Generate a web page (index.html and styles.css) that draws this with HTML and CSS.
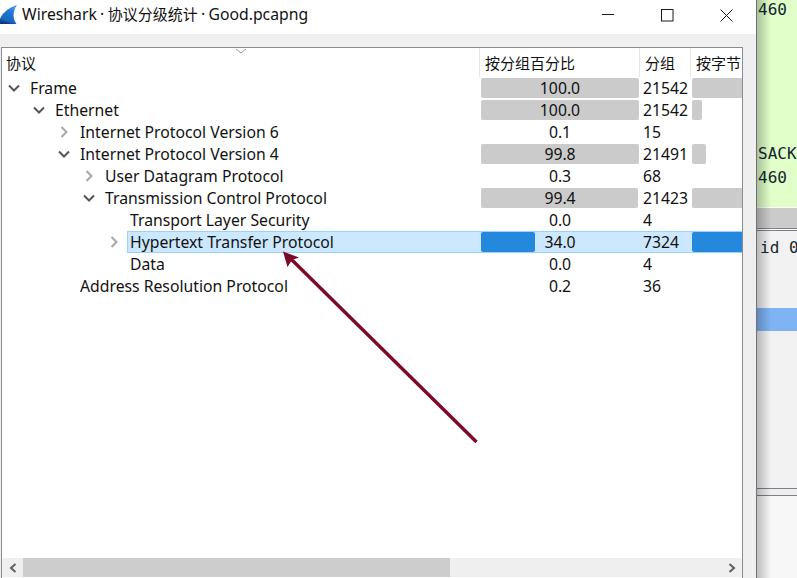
FILE: index.html
```html
<!DOCTYPE html>
<html lang="zh">
<head>
<meta charset="utf-8">
<title>Wireshark · 协议分级统计 · Good.pcapng</title>
<link rel="stylesheet" href="styles.css">
</head>
<body>
<div class="desktop">
  <main class="window">
    <header class="titlebar">
      <svg class="app-icon" width="17" height="20" viewBox="0 0 17 20">
        <defs><linearGradient id="fin" x1="0.8" y1="0" x2="0.5" y2="1"><stop offset="0" stop-color="#5aa8ea"/><stop offset="0.35" stop-color="#1f78d6"/><stop offset="0.85" stop-color="#1766bd"/><stop offset="1" stop-color="#123a78"/></linearGradient></defs>
        <path d="M-1 16C2 8 8 3 17 0C13 6 12 13 16.500 19L-1 19Z" fill="url(#fin)"/>
      </svg>
      <span class="title">Wireshark · <span class="cjk">协议分级统计</span> · Good.pcapng</span>
      <div class="controls">
        <svg class="control" width="14" height="13" viewBox="0 0 14 13"><path d="M1 5.5H13" stroke="#1a1a1a" fill="none"/></svg>
        <svg class="control" width="13" height="13" viewBox="0 0 13 13"><rect x="0.5" y="0.5" width="11.5" height="11.5" stroke="#1a1a1a" fill="none"/></svg>
        <svg class="control" width="13" height="13" viewBox="0 0 13 13"><path d="M0.5 0.5L12.5 12.5M12.5 0.5L0.5 12.5" stroke="#1a1a1a" fill="none"/></svg>
      </div>
    </header>
    <div class="content">
      <section class="tree">
        <div class="table">
          <div class="row head">
            <div class="hcell">协议<svg class="sort" width="12" height="6" viewBox="0 0 12 6"><path d="M1 1L6 5L11 1" stroke="#9a9a9a" fill="none"/></svg></div>
            <div class="hcell">按分组百分比</div>
            <div class="hcell">分组</div>
            <div class="hcell">按字节</div>
          </div>

          <div class="row l0">
            <div class="name"><span class="toggle"><svg width="12" height="8" viewBox="0 0 12 8"><path class="open" d="M1 1.5L6 6.5L11 1.5"/></svg></span><span class="label">Frame</span></div>
            <div class="cell pct"><i class="bar" style="width:158px"></i><b>100.0</b></div>
            <div class="cell num">21542</div>
            <div class="cell"><i class="bar" style="width:60px"></i></div>
          </div>
          <div class="row l1">
            <div class="name"><span class="toggle"><svg width="12" height="8" viewBox="0 0 12 8"><path class="open" d="M1 1.5L6 6.5L11 1.5"/></svg></span><span class="label">Ethernet</span></div>
            <div class="cell pct"><i class="bar" style="width:158px"></i><b>100.0</b></div>
            <div class="cell num">21542</div>
            <div class="cell"><i class="bar" style="width:10px"></i></div>
          </div>
          <div class="row l2">
            <div class="name"><span class="toggle"><svg class="chev-r" width="8" height="12" viewBox="0 0 8 12"><path class="closed" d="M1.5 1L6.5 6L1.5 11"/></svg></span><span class="label">Internet Protocol Version 6</span></div>
            <div class="cell pct"><b>0.1</b></div>
            <div class="cell num">15</div>
            <div class="cell"></div>
          </div>
          <div class="row l2">
            <div class="name"><span class="toggle"><svg width="12" height="8" viewBox="0 0 12 8"><path class="open" d="M1 1.5L6 6.5L11 1.5"/></svg></span><span class="label">Internet Protocol Version 4</span></div>
            <div class="cell pct"><i class="bar" style="width:158px"></i><b>99.8</b></div>
            <div class="cell num">21491</div>
            <div class="cell"><i class="bar" style="width:14px"></i></div>
          </div>
          <div class="row l3">
            <div class="name"><span class="toggle"><svg class="chev-r" width="8" height="12" viewBox="0 0 8 12"><path class="closed" d="M1.5 1L6.5 6L1.5 11"/></svg></span><span class="label">User Datagram Protocol</span></div>
            <div class="cell pct"><b>0.3</b></div>
            <div class="cell num">68</div>
            <div class="cell"></div>
          </div>
          <div class="row l3">
            <div class="name"><span class="toggle"><svg width="12" height="8" viewBox="0 0 12 8"><path class="open" d="M1 1.5L6 6.5L11 1.5"/></svg></span><span class="label">Transmission Control Protocol</span></div>
            <div class="cell pct"><i class="bar" style="width:157px"></i><b>99.4</b></div>
            <div class="cell num">21423</div>
            <div class="cell"><i class="bar" style="width:60px"></i></div>
          </div>
          <div class="row l4">
            <div class="name"><span class="toggle"></span><span class="label">Transport Layer Security</span></div>
            <div class="cell pct"><b>0.0</b></div>
            <div class="cell num">4</div>
            <div class="cell"></div>
          </div>
          <div class="row l4 selected">
            <div class="name"><span class="toggle"><svg class="chev-r" width="8" height="12" viewBox="0 0 8 12"><path class="closed" d="M1.5 1L6.5 6L1.5 11"/></svg></span><span class="label">Hypertext Transfer Protocol</span></div>
            <div class="cell pct"><i class="bar" style="width:54px"></i><b>34.0</b></div>
            <div class="cell num">7324</div>
            <div class="cell"><i class="bar" style="width:60px"></i></div>
          </div>
          <div class="row l4">
            <div class="name"><span class="toggle"></span><span class="label">Data</span></div>
            <div class="cell pct"><b>0.0</b></div>
            <div class="cell num">4</div>
            <div class="cell"></div>
          </div>
          <div class="row l2">
            <div class="name"><span class="toggle"></span><span class="label">Address Resolution Protocol</span></div>
            <div class="cell pct"><b>0.2</b></div>
            <div class="cell num">36</div>
            <div class="cell"></div>
          </div>
        </div>
        <div class="hscroll">
          <span class="arrow-btn"><svg width="8" height="10" viewBox="0 0 8 10"><path d="M6.5 1L2 5L6.5 9" stroke="#606060" stroke-width="2" fill="none"/></svg></span>
          <span class="thumb"></span>
          <span class="track"></span>
          <span class="arrow-btn"><svg width="8" height="10" viewBox="0 0 8 10"><path d="M1.5 1L6 5L1.5 9" stroke="#606060" stroke-width="2" fill="none"/></svg></span>
        </div>
      </section>
    </div>
  </main>

  <aside class="behind">
    <div class="packets">
      <div class="line">460</div>
      <div class="line gap">SACK</div>
      <div class="line">460</div>
    </div>
    <div class="band"></div>
    <div class="detail">
      <div class="line pad">id 0</div>
      <div class="picked"></div>
    </div>
    <div class="bytes-split"></div>
    <div class="bottom"></div>
  </aside>

  <svg class="callout" width="797" height="578" viewBox="0 0 797 578">
    <path d="M476.5 442L291 259" stroke="#7d0a26" stroke-width="3.4" fill="none"/>
    <path d="M283 251.5L299 257.500L292 260L287.500 267Z" fill="#7d0a26"/>
  </svg>
</div>
</body>
</html>
```
FILE: styles.css
```css
* { box-sizing: border-box; }
html, body { margin: 0; padding: 0; }
body { background: #fff; color: #111; font-family: "Noto Sans", "Noto Sans CJK SC", sans-serif; font-size: 15.75px; }

.desktop { position: relative; display: flex; width: 797px; height: 578px; overflow: hidden; }

.window { width: 757px; height: 578px; display: flex; flex-direction: column; border-right: 1px solid #6f7278; }
.titlebar { height: 34px; flex: none; display: flex; align-items: flex-start; background: #fff; }
.app-icon { flex: none; margin-top: 5px; }
.title { margin-left: 5px; line-height: 29px; white-space: nowrap; color: #111; word-spacing: -0.8px; }
.cjk { font-size: 15px; }
.controls { margin-left: auto; margin-right: 23px; display: flex; gap: 46px; padding-top: 9px; }
.control { display: block; }

.content { flex: 1; min-height: 0; background: #efefef; padding: 13px 13px 0 1px; display: flex; }
.tree { flex: 1; display: flex; flex-direction: column; background: #fff; border: 1px solid #878b94; border-bottom: 0; min-width: 0; }
.table { flex: 1; min-height: 0; }

.row { display: grid; grid-template-columns: 478px 160px 51px 51px; height: 22px; }
.head { height: 29px; font-size: 15px; }
.hcell { position: relative; padding: 2px 0 0 5px; line-height: 26px; white-space: nowrap; overflow: hidden; border-right: 1px solid #e6e6e6; }
.hcell:first-child { padding-left: 4px; }
.hcell:last-child { border-right: 0; }
.sort { position: absolute; left: 233px; top: 0; }

.name { display: flex; min-width: 0; line-height: 22px; }
.l0 .name { padding-left: 3px; }
.l1 .name { padding-left: 28px; }
.l2 .name { padding-left: 53px; }
.l3 .name { padding-left: 78px; }
.l4 .name { padding-left: 103px; }
.toggle { flex: none; width: 22px; display: flex; align-items: center; padding-left: 3px; }
.toggle svg { display: block; }
.toggle .chev-r { margin-left: 2px; }
.open { fill: none; stroke: #555; stroke-width: 2; }
.closed { fill: none; stroke: #a8a8a8; stroke-width: 2; }
.label { flex: 1; padding-left: 3px; white-space: nowrap; }

.cell { position: relative; line-height: 22px; overflow: hidden; white-space: nowrap; }
.num { padding-left: 3px; }
.pct { text-align: center; }
.pct b { position: relative; font-weight: 400; }
.bar { position: absolute; left: 1px; top: 1px; bottom: 1px; background: #cbcbcb; border-radius: 2px; }

.selected .label, .selected .cell { background: #cce8ff; border-top: 1px solid #99d1ff; border-bottom: 1px solid #99d1ff; line-height: 20px; }
.selected .label { border-left: 1px solid #99d1ff; padding-left: 2px; }
.selected .bar { top: 0; bottom: 0; background: #2488dc; }

.hscroll { flex: none; height: 19px; display: flex; background: #efefef; margin-bottom: 1px; }
.arrow-btn { flex: none; width: 21px; display: flex; align-items: center; justify-content: center; }
.thumb { flex: none; width: 427px; background: #cdcdcd; }
.track { flex: 1; }

.behind { position: relative; flex: 1; min-width: 0; display: flex; flex-direction: column; background: #f5f5f5; font-family: "DejaVu Sans Mono", monospace; font-size: 16px; color: #12272e; overflow: hidden; }
.behind::after { content: ""; position: absolute; inset: 0 auto 0 0; width: 14px; background: linear-gradient(to right, rgba(0,0,0,.24), rgba(0,0,0,0)); }
.packets { height: 207px; flex: none; background: #e0ffc9; padding-left: 1px; overflow: hidden; }
.line { line-height: 24px; white-space: nowrap; }
.packets .line:first-child { margin-top: -2px; }
.gap { margin-top: 120px; }
.band { height: 24px; flex: none; background: #fff; border-bottom: 1px solid #7c8088; position: relative; }
.band::before { content: ""; display: block; height: 20px; margin-top: 1px; background: #cbcbcb; border-bottom: 1px solid #7c8088; }
.detail { height: 257px; flex: none; background: #f2f2f2; }
.pad { padding: 5px 0 0 3px; line-height: 24px; height: 77px; }
.picked { height: 23px; background: #7eb4f4; }
.bytes-split { height: 8px; flex: none; background: #efefef; border-top: 1px solid #7c8088; border-bottom: 1px solid #7c8088; }
.bottom { flex: 1; background: #f7f7f7; }

.callout { position: absolute; left: 0; top: 0; pointer-events: none; }
```
